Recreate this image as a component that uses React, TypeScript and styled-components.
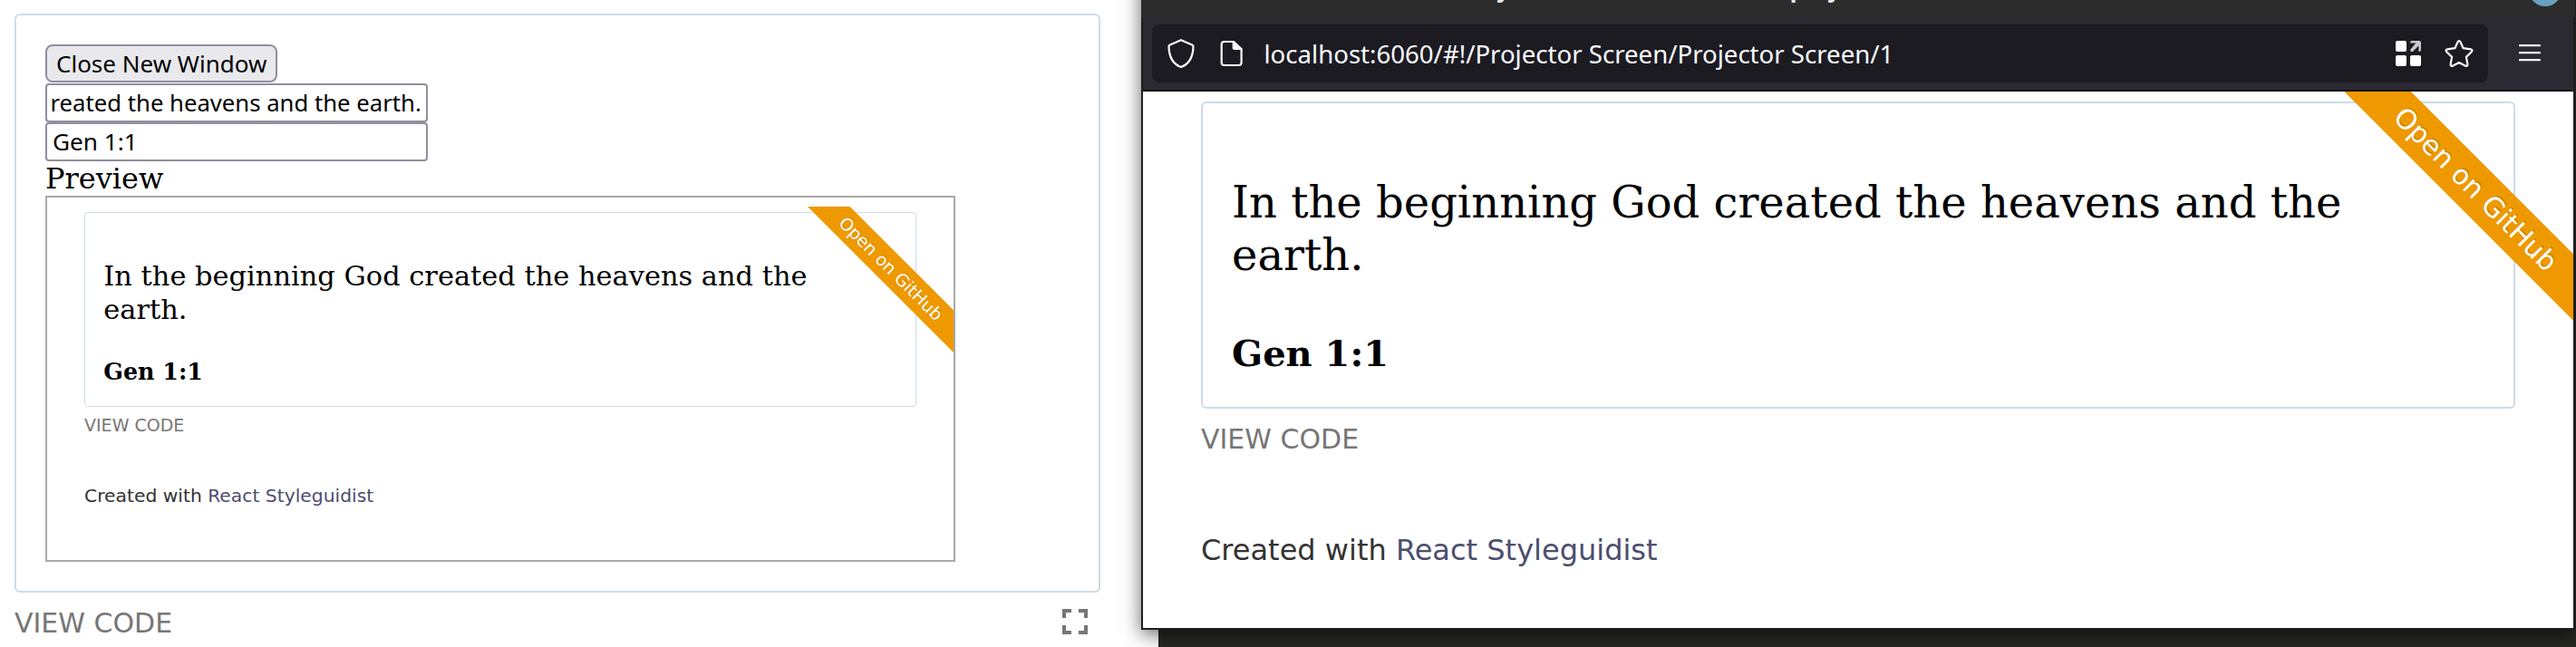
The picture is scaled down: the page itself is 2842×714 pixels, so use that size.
import React from "react";
import styled, { createGlobalStyle, css } from "styled-components";

const UI_FONT = '"Noto Sans", sans-serif';
const SERIF = '"DejaVu Serif", serif';
const SANS = '"DejaVu Sans", sans-serif';

const GlobalStyle = createGlobalStyle`
  * { box-sizing: border-box; }
  body { margin: 0; background: #fff; overflow: hidden; }
`;

const Desktop = styled.div`
  position: relative;
  display: flex;
  width: 2842px;
  height: 714px;
  overflow: hidden;
`;

/* ---------- styleguide page on the left ---------- */

const GuidePage = styled.main`
  width: 1278px;
  padding: 15px 64px 0 16px;
  background: #fff;
`;

const Backdrop = styled.div`
  flex: 1;
  background: #272822;
`;

const ExampleCard = styled.section`
  height: 639px;
  padding: 32px;
  border: 2px solid #cfdbe7;
  border-radius: 6px;
  display: flex;
  flex-direction: column;
  align-items: flex-start;
`;

const control = css`
  display: flex;
  align-items: center;
  border: 2px solid #8f8f9d;
  color: #000;
  font-family: ${UI_FONT};
  white-space: nowrap;
  overflow: hidden;
`;

const CloseButton = styled.button`
  ${control}
  width: 256px;
  height: 42px;
  margin: 0 0 1px;
  padding: 0 0 0 10px;
  border-radius: 8px;
  background: #e9e9ed;
  font-size: 26px;
`;

const Field = styled.div<{ $indent: number; $size: number; $lift?: number }>`
  ${control}
  width: 422px;
  height: 43px;
  padding: 0 0 ${(p) => p.$lift ?? 0}px ${(p) => p.$indent}px;
  border-radius: 4px;
  background: #fff;
  font-size: ${(p) => p.$size}px;
`;

const PreviewLabel = styled.div`
  font: 32px/38px ${SERIF};
  color: #000;
`;

const PreviewFrame = styled.div`
  width: 1004px;
  height: 404px;
  padding-top: 10px;
  border: 2px solid #a9a9a9;
  overflow: hidden;
`;

const Footer = styled.div`
  display: flex;
  justify-content: space-between;
  align-items: flex-start;
  padding: 8px 4px 0 0;
`;

const ViewCode = styled.span`
  margin-top: 7.5px;
  font: 30px/36px ${SANS};
  color: #767676;
`;

const FullscreenIcon = styled.svg`
  display: block;
  width: 48px;
  height: 48px;
  fill: #767676;
`;

/* ---------- projector screen, drawn at two zoom levels ---------- */

interface Zoomed {
  $k: number;
}
const z = (n: number) => (p: Zoomed) => `${(n * p.$k).toFixed(2)}px`;
const snap = (n: number) => (p: Zoomed) => `${Math.floor(n * p.$k * 2) / 2}px`;

const Screen = styled.div`
  position: relative;
  width: 100%;
  height: 100%;
  overflow: hidden;
  background: #fff;
`;

const ScreenBody = styled.div<Zoomed>`
  padding: ${(p) => Math.floor(11 * p.$k)}px ${(p) => Math.round(64 * p.$k)}px 0;
`;

const VerseCard = styled.div<Zoomed>`
  height: ${(p) => Math.round(339 * p.$k)}px;
  padding: ${(p) => Math.ceil(80 * p.$k)}px ${z(32)} 0;
  border: ${(p) => Math.floor(2 * p.$k)}px solid #cfdbe7;
  border-radius: ${z(6)};
  color: #000;
`;

const Verse = styled.p<Zoomed>`
  width: ${z(1260)};
  margin: 0;
  font: ${z(48)} / ${(p) => Math.round(58 * p.$k)}px ${SERIF};
`;

const Reference = styled.h3<Zoomed>`
  margin: ${(p) => Math.floor(56.1 * p.$k)}px 0 0;
  font: bold ${z(40)} / 1.2 ${SERIF};
`;

const ScreenViewCode = styled.div<Zoomed>`
  margin-top: ${(p) => (17.2 * p.$k - 1.5).toFixed(1)}px;
  font: ${z(30)} / 1.2 ${SANS};
  color: #767676;
`;

const Credit = styled.div<Zoomed>`
  margin-top: ${snap(85.5)};
  font: ${z(32)} / 1.2 ${SANS};
  color: #333;
`;

const CreditLink = styled.span`
  color: #4b4e6d;
`;

const Ribbon = styled.div<Zoomed>`
  position: absolute;
  top: ${z(82.3)};
  right: ${z(-91.6)};
  width: ${z(400)};
  height: ${z(52.2)};
  display: flex;
  align-items: center;
  justify-content: center;
  transform: rotate(45deg);
  background: #ee9900;
  color: #fff;
  font: ${z(30)} / 1.2 ${SANS};
  text-shadow: 0 ${z(-2)} 0 rgba(0, 0, 0, 0.15);
  white-space: nowrap;
`;

function ProjectorScreen({ k }: { k: number }) {
  return (
    <Screen>
      <ScreenBody $k={k}>
        <VerseCard $k={k}>
          <Verse $k={k}>In the beginning God created the heavens and the earth.</Verse>
          <Reference $k={k}>Gen 1:1</Reference>
        </VerseCard>
        <ScreenViewCode $k={k}>VIEW CODE</ScreenViewCode>
        <Credit $k={k}>
          Created with <CreditLink>React Styleguidist</CreditLink>
        </Credit>
      </ScreenBody>
      <Ribbon $k={k}>Open on GitHub</Ribbon>
    </Screen>
  );
}

/* ---------- browser window on the right ---------- */

const BrowserWindow = styled.div`
  position: absolute;
  left: 1259px;
  top: -40px;
  width: 1583px;
  height: 735px;
  display: flex;
  flex-direction: column;
  border: solid #1e1e1e;
  border-width: 0 3px 2px 2px;
  background: #fff;
  box-shadow: 0 5px 20px rgba(0, 0, 0, 0.6);
`;

const TitleBar = styled.div`
  flex: none;
  display: flex;
  justify-content: space-between;
  height: 59px;
  margin: 0 -2px;
  padding: 9px 15px 0 351px;
  background: #2c2c2c;
`;

const TitleText = styled.div`
  display: flex;
  color: #e8e8e8;
  font: bold 26px/36px ${UI_FONT};
`;

const TitlePart = styled.span<{ $w: number }>`
  width: ${(p) => p.$w}px;
`;

const WindowButton = styled.div`
  width: 36px;
  height: 36px;
  margin-top: 2px;
  border-radius: 50%;
  background: #6a9fc0;
`;

const Toolbar = styled.div`
  flex: none;
  display: flex;
  align-items: flex-start;
  height: 82px;
  padding: 8px 36px 0 10px;
  border-bottom: 2px solid #0c0c0d;
  background: #2b2a33;
`;

const AddressBar = styled.div`
  display: flex;
  align-items: center;
  width: 1474px;
  height: 64px;
  margin-right: 34px;
  padding: 0 15px 0 15px;
  border-radius: 8px;
  background: #1c1b22;
`;

const Address = styled.span`
  flex: 1;
  margin-left: 20.5px;
  color: #fbfbfe;
  font: 27.6px/36px ${UI_FONT};
  white-space: nowrap;
`;

const ToolIcon = styled.svg<{ $gap?: number }>`
  display: block;
  flex: none;
  width: 34px;
  height: 34px;
  margin-left: ${(p) => p.$gap ?? 0}px;
  overflow: visible;
`;

const MenuIcon = styled.svg`
  display: block;
  width: 24px;
  height: 64px;
`;

const Viewport = styled.div`
  flex: 1;
  min-height: 0;
`;

export default function App() {
  return (
    <>
      <GlobalStyle />
      <Desktop>
        <GuidePage>
          <ExampleCard>
            <CloseButton>Close New Window</CloseButton>
            <Field $indent={3.5} $size={25.7}>reated the heavens and the earth.</Field>
            <Field $indent={6} $size={26.2} $lift={2}>Gen 1:1</Field>
            <PreviewLabel>Preview</PreviewLabel>
            <PreviewFrame>
              <ProjectorScreen k={0.6342} />
            </PreviewFrame>
          </ExampleCard>
          <Footer>
            <ViewCode>VIEW CODE</ViewCode>
            <FullscreenIcon viewBox="0 0 24 24">
              <path d="M7 14H5v5h5v-2H7v-3zm-2-4h2V7h3V5H5v5zm12 7h-3v2h5v-5h-2v3zM14 5v2h3v3h2V5h-5z" />
            </FullscreenIcon>
          </Footer>
        </GuidePage>
        <Backdrop />

        <BrowserWindow>
          <TitleBar>
            <TitleText>
              <TitlePart $w={229}>Projector</TitlePart>
              <TitlePart $w={125}>@</TitlePart>
              <TitlePart $w={200}>/projector</TitlePart>
            </TitleText>
            <WindowButton />
          </TitleBar>
          <Toolbar>
            <AddressBar>
              {/* tracking protection shield */}
              <ToolIcon viewBox="0 0 34 34" fill="none" stroke="#fbfbfe" strokeWidth="2.2" strokeLinejoin="round">
                <path d="M17 2.2 L29.2 7.6 Q30.6 8.3 30.5 9.6 C30.2 20 26.5 28.5 17 32 C7.5 28.5 3.8 20 3.5 9.6 Q3.4 8.3 4.8 7.6 Z" />
              </ToolIcon>
              {/* page information */}
              <ToolIcon viewBox="0 0 34 34" $gap={20}>
                <path
                  d="M20 4 H10.7 a3 3 0 0 0 -3 3 V27 a3 3 0 0 0 3 3 H26.6 a3 3 0 0 0 3 -3 V12.5 L20.6 4 Z"
                  fill="none"
                  stroke="#fbfbfe"
                  strokeWidth="2.2"
                />
                <path d="M19.7 3 H21.5 L30.7 11.7 V13 H21.7 a2 2 0 0 1 -2 -2 Z" fill="#fbfbfe" />
              </ToolIcon>
              <Address>localhost:6060/#!/Projector Screen/Projector Screen/1</Address>
              {/* open tiles */}
              <ToolIcon viewBox="0 0 34 34">
                <g fill="#fff">
                  <rect x="3" y="3" width="12" height="12" rx="2" />
                  <rect x="3" y="19" width="12" height="12" rx="2" />
                  <rect x="19" y="19" width="12" height="12" rx="2" />
                </g>
                {/* arrow pointing to the upper right */}
                <path
                  d="M19 5 a2 2 0 0 1 2 -2 H29 a2 2 0 0 1 2 2 V13 a2 2 0 0 1 -2 2 L28.4 14.4 V8.6 L21.8 15 H21 a2 2 0 0 1 -2 -2 L25.4 5.6 H19.6 Z"
                  fill="#c9c9cb"
                />
              </ToolIcon>
              {/* bookmark star */}
              <ToolIcon viewBox="0 0 34 34" $gap={22} fill="none" stroke="#fbfbfe" strokeWidth="2.2" strokeLinejoin="round">
                <path d="M15.5 4.4 Q17 1.8 18.5 4.4 L21.6 11.2 L29.8 12.3 Q32.6 13 30.7 15.2 L24.9 20.9 L26.4 29 Q26.5 31.6 24.1 30.7 L17 27 L9.9 30.7 Q7.5 31.6 7.6 29 L9.1 20.9 L3.3 15.2 Q1.4 13 4.2 12.3 L12.4 11.2 Z" />
              </ToolIcon>
            </AddressBar>
            <MenuIcon viewBox="0 0 24 64" stroke="#fbfbfe" strokeWidth="2.3" strokeLinecap="round">
              <path d="M1 23.2H23M1 31.2H23M1 39.2H23" />
            </MenuIcon>
          </Toolbar>
          <Viewport>
            <ProjectorScreen k={1} />
          </Viewport>
        </BrowserWindow>
      </Desktop>
    </>
  );
}
